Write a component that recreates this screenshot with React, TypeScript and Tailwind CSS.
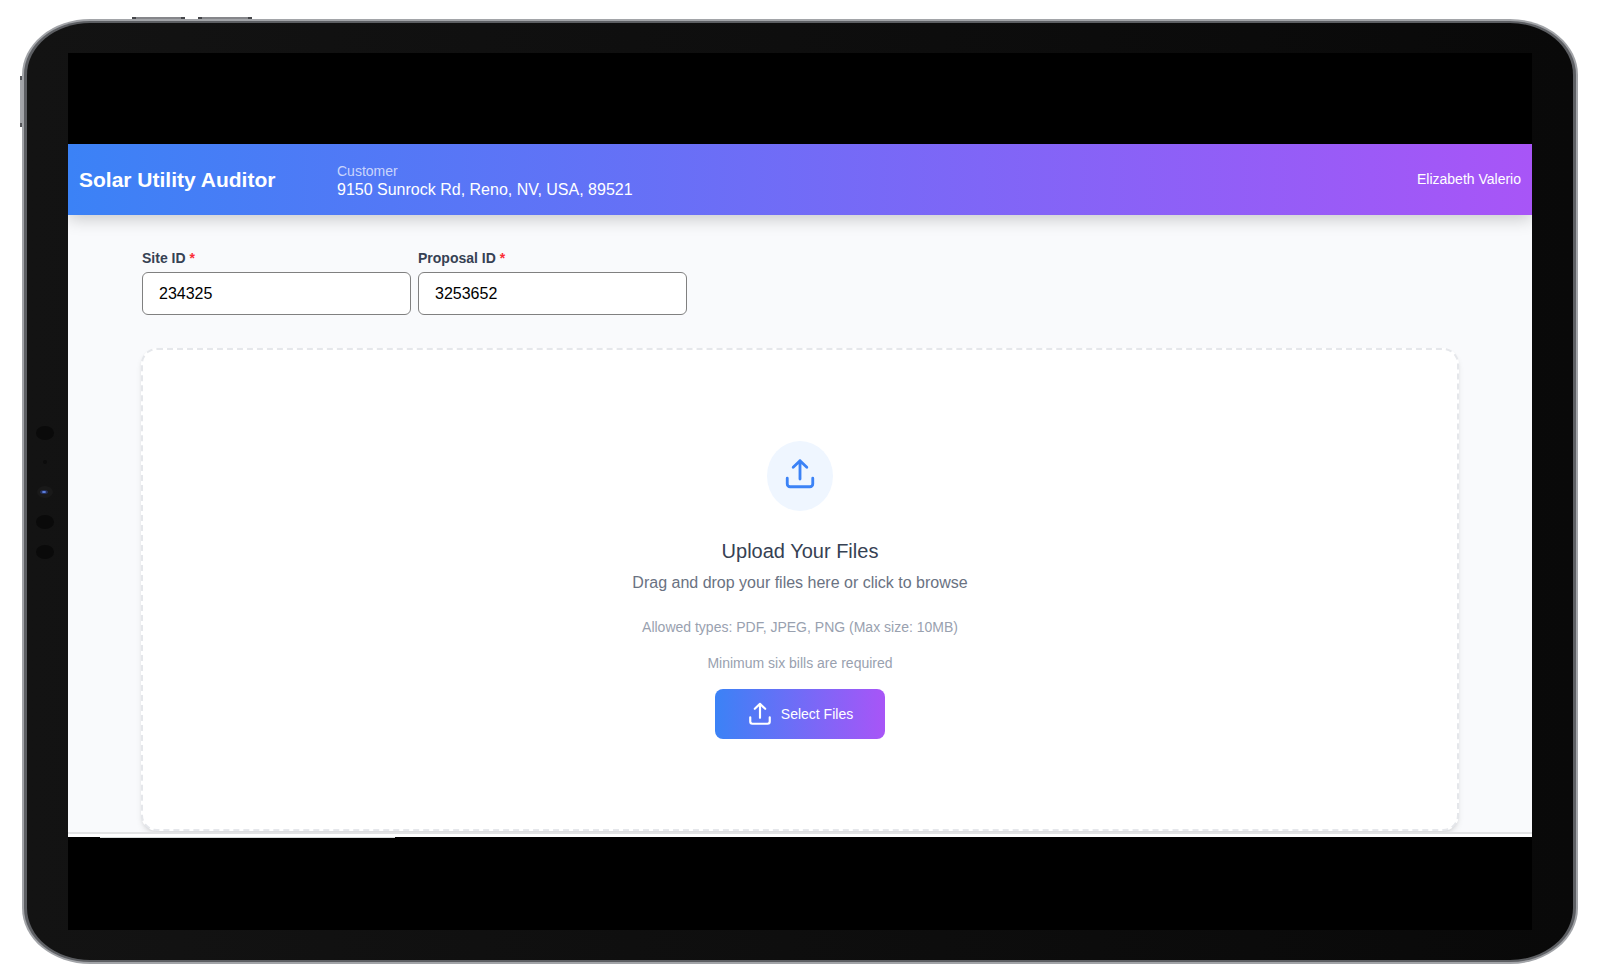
import type { SVGProps } from "react";

const fields = [
  { id: "site-id", label: "Site ID", value: "234325" },
  { id: "proposal-id", label: "Proposal ID", value: "3253652" },
];

function UploadIcon(props: SVGProps<SVGSVGElement>) {
  return (
    <svg viewBox="0 0 24 24" fill="none" stroke="currentColor" strokeWidth={2} strokeLinecap="round" strokeLinejoin="round" aria-hidden="true" {...props}>
      <path d="M3 15v4a2 2 0 0 0 2 2h14a2 2 0 0 0 2-2v-4" />
      <path d="M7.2 7.2L12 2.6l4.8 4.6M12 2.6V15.5" />
    </svg>
  );
}

function Header() {
  return (
    <header className="relative z-10 flex h-[71px] shrink-0 items-center bg-linear-to-r/srgb from-[#3b82f6] to-[#a855f7] px-[11px] text-white shadow-[0_4px_16px_rgba(0,0,0,0.2)]">
      <h1 className="w-[258px] text-[21px] font-bold">Solar Utility Auditor</h1>
      <div className="pt-0.5">
        <p className="text-sm leading-[18px] text-white/70">Customer</p>
        <p className="text-base leading-5">9150 Sunrock Rd, Reno, NV, USA, 89521</p>
      </div>
      <span className="ml-auto pb-px text-sm">Elizabeth Valerio</span>
    </header>
  );
}

function UploadCard() {
  return (
    <section className="flex h-[483px] flex-col items-center justify-center rounded-2xl border-2 border-dashed border-gray-200 bg-white text-center shadow-md">
      <div className="flex h-[70px] w-[66px] items-center justify-center rounded-[50%] bg-[#eff6ff] pb-1">
        <UploadIcon className="h-[34px] w-[34px] text-[#3b82f6]" />
      </div>
      <h2 className="mt-6 text-xl leading-8 text-gray-700">Upload Your Files</h2>
      <p className="mt-1 text-base leading-6 text-gray-500">Drag and drop your files here or click to browse</p>
      <p className="mt-[22px] text-sm leading-5 text-gray-400">Allowed types: PDF, JPEG, PNG (Max size: 10MB)</p>
      <p className="mt-4 text-sm leading-5 text-gray-400">Minimum six bills are required</p>
      <button type="button" className="mt-4 flex h-[50px] w-[170px] items-center justify-center gap-2 rounded-lg bg-linear-to-r/srgb from-[#3b82f6] to-[#a855f7] text-sm text-white">
        <UploadIcon className="h-[26px] w-[26px]" />
        Select Files
      </button>
    </section>
  );
}

// Sensors along the short edge of the tablet
function Sensors() {
  return (
    <svg className="w-5 shrink-0" viewBox="0 0 20 140" height="140" aria-hidden="true">
      <ellipse cx="10" cy="11" rx="9" ry="7" fill="#0a0a0a" />
      <circle cx="10" cy="40" r="2" fill="#0c0c0c" />
      <ellipse cx="10" cy="70" rx="8" ry="6" fill="#191919" />
      <ellipse cx="9" cy="70" rx="4" ry="2" fill="#26305c" />
      <ellipse cx="9" cy="70" rx="2" ry="1" fill="#5f86e8" />
      <ellipse cx="10" cy="100" rx="9" ry="7" fill="#0a0a0a" />
      <ellipse cx="10" cy="130" rx="9" ry="7" fill="#0a0a0a" />
    </svg>
  );
}

export default function App() {
  return (
    <div className="flex min-h-screen bg-white pt-[19px] pr-5 pb-4 pl-[22px] font-['Liberation_Sans',Arial,sans-serif]">
      <div className="relative flex flex-1">
        {/* Hardware buttons */}
        <div className="absolute -top-0.5 left-[110px] h-1 w-[53px] border-x-4 border-[#45464a] bg-[#85868a]" />
        <div className="absolute -top-0.5 left-[176px] h-1 w-[54px] border-x-4 border-[#45464a] bg-[#85868a]" />
        <div className="absolute top-[57px] -left-0.5 h-[51px] w-1 border-y-4 border-[#55565a] bg-[#a5a7ab]" />

        <div className="relative flex flex-1 rounded-[68px/56px] bg-[#a2a4a8] p-0.5">
          <div className="flex flex-1 rounded-[66px/54px] bg-[#5d5f63] px-[3px] py-0.5">
            <div className="flex flex-1 rounded-[63px/52px] bg-gradient-to-r from-[#131313] to-[#090909] pt-[30px] pr-[41px] pb-[30px]">
              <div className="flex w-[41px] shrink-0 items-center pl-2">
                <Sensors />
              </div>
              <div className="flex flex-1 flex-col overflow-hidden bg-black pt-[91px] pb-[92px]">
                <Header />
                <main className="flex-1 bg-[#f9fafc] px-[73px] pt-[33px] pb-px">
                  <form className="mb-[33px] flex gap-[7px] px-px">
                    {fields.map((field) => (
                      <div key={field.id} className="w-[269px]">
                        <label htmlFor={field.id} className="block pb-1 text-sm leading-5 font-bold text-gray-700">
                          {field.label} <span className="text-red-500">*</span>
                        </label>
                        <input id={field.id} defaultValue={field.value} className="block h-[43px] w-full rounded-md border border-[#808080] bg-white px-4 text-base text-black" />
                      </div>
                    ))}
                  </form>
                  <UploadCard />
                </main>
                {/* Bottom edge of the window */}
                <div className="h-[5px] shrink-0 border-t-2 border-[#e2e3e4] bg-white" />
                <div className="ml-8 h-px w-[295px] shrink-0 bg-[#d5d9d9]" />
              </div>
            </div>
          </div>
        </div>
      </div>
    </div>
  );
}
